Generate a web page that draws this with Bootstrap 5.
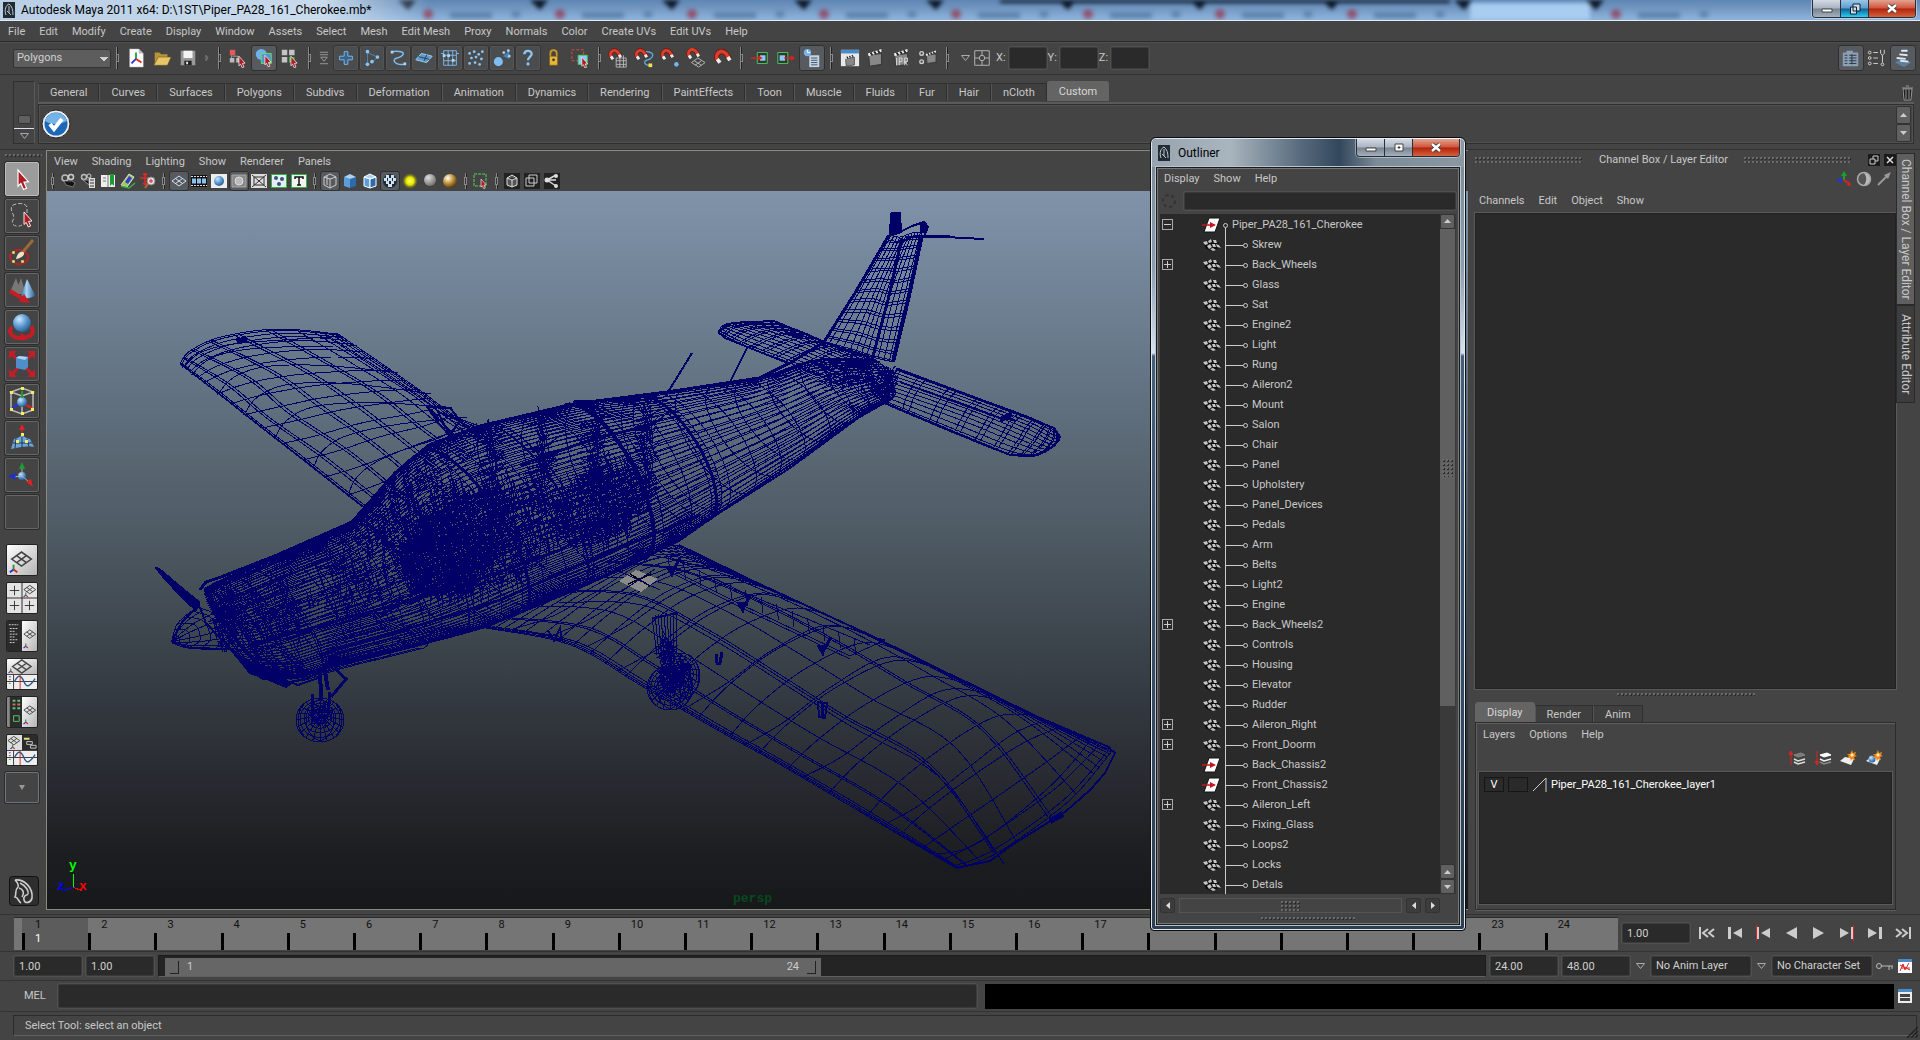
<!DOCTYPE html>
<html lang="en">
<head>
<meta charset="utf-8">
<meta name="viewport" content="width=device-width, initial-scale=1">
<title>Autodesk Maya 2011 x64</title>
<link rel="stylesheet" href="https://cdn.jsdelivr.net/npm/bootstrap@5.3.0/dist/css/bootstrap.min.css">
<style>
:root{--ui:#444;--well:#2a2a2a;--txt:#c8c8c8;--edge:#2b2b2b;--lite:#5c5c5c}
body{background:var(--ui);color:var(--txt);font:11px/14px Roboto,"Liberation Sans",sans-serif;height:100vh;overflow:hidden}
button,input,select{font:inherit;color:inherit}
a{color:inherit;text-decoration:none}
button{background:none;border:0;padding:0}
svg{display:block}
.titlebar{height:21px;border-bottom:1px solid #dfeaf5;color:#000;font:12px/20px Roboto,"Noto Sans",sans-serif;position:relative;overflow:hidden;
 background:linear-gradient(180deg,#40587a00 0,#88aace55 30%,#8fb4dc 100%),#5f86b4}
.tabsblur{position:absolute;inset:0;filter:blur(2px)}
.titleglow{position:relative;background:linear-gradient(90deg,#b9cfe6 0,#cfdfefee 75%,#cfdfef00 100%);padding:0 60px 0 3px;gap:6px}
.winbtns{position:relative;height:18px;border:1px solid #26303c;border-top:0;border-radius:0 0 4px 4px;overflow:hidden;box-shadow:0 0 0 1px #ffffff66}
.winbtns button{width:28px;border-right:1px solid #26303c;background:linear-gradient(#d3dae2 0,#a9b3bf 48%,#77838f 52%,#a4b0bc);display:flex;align-items:center;justify-content:center}
.winbtns .b-hot{background:linear-gradient(#9cc6e8,#5c9dcc 48%,#14608f 52%,#22d0f5)}
.winbtns .b-close{width:46px;border:0;background:linear-gradient(#e3a291 0,#d0543c 48%,#b3230c 52%,#d3623c)}
.menu{display:flex;gap:14px}
.appmenu{height:21px;padding:4px 8px 0;border-bottom:1px solid #292929}
.statusline{height:33px;border-bottom:1px solid #333;border-top:1px solid #4f4f4f;padding-left:13px}
.grip{background:radial-gradient(circle at 1px 1px,#6a6a6a 1px,transparent 1px) 0 0/4px 4px,radial-gradient(circle at 1px 1px,#2c2c2c 1px,transparent 1px) 1px 1px/4px 4px}
.modesel{width:98px;height:19px;background:#5d5d5d;border:1px solid #333;border-radius:2px;padding:0 3px;appearance:none;color:#d0d0d0;background-image:linear-gradient(45deg,transparent 50%,#d0d0d0 50%),linear-gradient(-45deg,transparent 50%,#d0d0d0 50%);background-size:4px 5px;background-position:86px 7px,90px 7px;background-repeat:no-repeat;background-image:linear-gradient(to top right,transparent 50%,#d0d0d0 50%),linear-gradient(to top left,transparent 50%,#d0d0d0 50%)}
.cell{width:26px;height:26px;display:flex;align-items:center;justify-content:center;flex:none}
.cell svg{width:20px;height:20px}
.cell.on{background:#575a5e;box-shadow:inset 0 0 0 1px #303030;border-radius:3px}
.cell.flat{box-shadow:inset 0 0 0 1px #353535,inset 0 0 0 2px #555;border-radius:3px;background:#4b4c4e}
.cell.thin{width:12px}.cell.mid{width:18px}
.vsep{width:11px;height:22px;flex:none;background:linear-gradient(#888,#888) 5px 0/1px 22px no-repeat,linear-gradient(#222,#222) 6px 0/1px 22px no-repeat;display:flex;align-items:center;justify-content:center}
.vsep::after{content:"";width:3px;height:8px;border:1px solid #888;background:#333}
#status .vsep{width:12px}
.field{background:var(--well);border:1px solid #3a3a3a;border-radius:2px;box-shadow:0 0 0 1px #505050;padding:0 4px;min-width:0;color:#d0d0d0}
.xyz{width:38px;height:22px;margin:0 1px 0 3px}
.shelf{padding:6px 6px 5px 13px;height:75px;border-bottom:1px solid #333}
.shelfside{width:22px;border:1px solid #303030;border-right-color:#5a5a5a}
.shelfmain{margin-left:3px}
.stab,.ltab{padding:0 11px;height:18px;line-height:17px;border:1px solid #2f2f2f;border-left-color:#555;border-bottom:0;background:#3f3f3f}
.ltab{height:17px}
.stab.on,.ltab.on{background:#646464;border-radius:3px 3px 0 0;color:#d8d8d8;border-color:#646464;height:20px}
.shelfbody{border:1px solid #2f2f2f;box-shadow:0 -2px 0 #5a5a5a,inset 0 0 0 1px #505050;height:40px;margin-top:3px;padding:1px 2px}
.scrollb{background:#606060;border:1px solid #333;border-radius:2px;display:flex;align-items:center;justify-content:center;color:#ccc}
.toolbox{width:42px;padding:4px 0 0 5px;flex:none}
.tool{width:34px;height:34px;border:1px solid #666;box-shadow:0 0 0 1px #2d2d2d;border-radius:2px;display:flex;align-items:center;justify-content:center;margin-bottom:3px}
.tool svg{width:30px;height:30px}
.tool.on{background:#9c9c9c;border-color:#bbb}
.layouts{padding-top:12px}
.lay{width:32px;height:32px;margin:0 0 6px 1px;display:block}
.lay svg{width:32px;height:32px;border:1px solid #222;border-radius:2px}
.viewport{border:1px solid #8a8a80;border-right:0;min-width:0}
.vmenu{height:20px;padding:4px 0 0 7px}
.pbar{height:20px}
.pbar .cell{width:20px;height:20px}.pbar .cell svg{width:16px;height:16px}
.pbar .vsep{height:16px;background-size:1px 16px}
.stage{background:linear-gradient(#8093a9 0,#68798a 22%,#505c66 46%,#3b434a 64%,#2c2f36 78%,#1b1d20 93%,#17181a);overflow:hidden;position:relative}
.stage svg{overflow:visible}
.wire path{stroke:#000066;fill:none;stroke-width:1;shape-rendering:crispEdges}
.wire .blk{fill:#000066}
.axl{font:bold 13px "Liberation Mono",monospace}
.dock{width:452px;flex:none;padding:3px 0 0 7px;position:relative}
.wellbox{background:var(--well);border:1px solid #222;box-shadow:0 0 0 1px #5a5a5a}
.layerpane{border:1px solid #2c2c2c;box-shadow:inset 1px 1px 0 #606060,0 1px 0 #5c5c5c;height:188px;padding:5px 3px}
.laybtn{width:20px;height:15px;line-height:13px;border:1px solid #161616}
.vtab{writing-mode:vertical-rl;white-space:nowrap;width:19px;border:1px solid #2a2a2a;font-size:12px;line-height:17px;background:#3d3d3d}
.vtab.on{background:#5f5f5f}
.tbar{border-top:1px solid #333;position:relative}
.ruler{background:#757575;border-top:1px solid #2b2b2b;height:33px;padding:0 7px 0 8px;color:#111}
.frame{flex:1 1 0;border-left:3px solid transparent;border-image:linear-gradient(#0000 15px,#000 15px) 1;padding-left:10px;line-height:14px;min-width:0}
.frame.now{background:#5c5c5c}
.range{background:#242424;height:22px;border:1px solid #1c1c1c;border-bottom-color:#606060;padding:2px 0 0 6px}
.rbar{width:656px;height:18px;background:#666;color:#ccc;padding:0 5px}
.rend{width:9px;height:13px;border:solid #222;border-width:0 1px 1px 0}
.numf{width:68px;height:20px}
.namef{width:100px;height:20px}
.tri{width:9px;height:6px;margin:0 2px}
.trans svg{width:26px;height:16px}
.outliner{position:absolute;z-index:5;top:137px;right:454px;bottom:109px;width:316px;border-radius:6px 6px 4px 4px;border:1px solid #0c0c0c;padding:0 5px 5px;display:flex;flex-direction:column;
 background:linear-gradient(#8a97a3 0,#7f8d99 30px,#8c9db0 130px,#d6e2ee 215px,#46607c 218px,#3c5370 50%,#2c3e50);box-shadow:inset 0 0 0 1px #dfe8f0}
.ohead{height:28px;color:#000;font:12px/28px Roboto,sans-serif;margin:1px -4px 0;padding-left:6px;border-radius:5px 5px 0 0;background:linear-gradient(90deg,#97a4af 0,#a9b5be 25%,#56697c 48%,#33475c 60%,#7d8b98 72%,#8b98a2)}
.oclient{border:1px solid #1c1c1c;box-shadow:0 0 0 1px #b8c4cf,inset 0 0 0 1px #777;background:var(--ui);min-height:0;padding:4px 3px 3px}
.tree{background:var(--well);overflow:hidden;position:relative;padding-top:1px}
.trow{height:20px;display:flex;align-items:center}
.exp{width:11px;height:11px;border:1px solid #aaa;margin:0 29px 0 2px;position:relative;flex:none}
.exp.none{visibility:hidden}
.exp::before,.exp.plus::after{content:"";position:absolute;background:#ccc;left:1px;top:4px;width:7px;height:1px}
.exp.plus::after{transform:rotate(90deg)}
.conn{width:26px;height:20px;flex:none;margin:0 3px 0 2px}
.conn.root{width:6px}
.tree svg.ti{width:19px;height:16px;flex:none}
.mini{width:15px;height:15px}
.dim{background:#3c3c3c}
.sizer{position:absolute;right:2px;bottom:2px}
</style>
<script src="https://cdn.jsdelivr.net/npm/bootstrap@5.3.0/dist/js/bootstrap.bundle.min.js"></script>
</head>
<body class="d-flex flex-column position-relative m-0">
<svg width="0" height="0" class="position-absolute" aria-hidden="true">
<defs>
<radialGradient id="gBlue" cx=".35" cy=".3" r=".8"><stop offset="0" stop-color="#cfe9ff"/><stop offset=".5" stop-color="#5a9ad2"/><stop offset="1" stop-color="#1f4f82"/></radialGradient>
<radialGradient id="gGold" cx=".35" cy=".3" r=".8"><stop offset="0" stop-color="#fff"/><stop offset=".45" stop-color="#c59a3e"/><stop offset="1" stop-color="#3c2505"/></radialGradient>
<radialGradient id="gGrey" cx=".35" cy=".3" r=".8"><stop offset="0" stop-color="#ddd"/><stop offset="1" stop-color="#666"/></radialGradient>
<radialGradient id="gYel"><stop offset="0" stop-color="#ffff60"/><stop offset=".5" stop-color="#e6e600"/><stop offset="1" stop-color="#77770000"/></radialGradient>
<linearGradient id="gWhite" x2="1" y2="1"><stop stop-color="#fff"/><stop offset="1" stop-color="#b5b5b5"/></linearGradient>
<linearGradient id="gCone"><stop stop-color="#2f6ca4"/><stop offset=".4" stop-color="#a9d4f5"/><stop offset="1" stop-color="#2a6296"/></linearGradient>
<path id="arw" d="M0 0l8 9-3.400 .4 2 4.600-2.400 1-2-4.600L0 12.500z" fill="#b01c26" stroke="#fff" stroke-width=".9"/>
<g id="persp"><path d="M0 0L7-5 14 0 7 5zM3.500-2.500L10.500 2.500M3.500 2.500L10.500-2.500" fill="none" stroke="#444" stroke-width="1.100"/></g>
<g id="axs"><path d="M0 0v-5" stroke="#1a9c2e" stroke-width="2"/><path d="M0 0l-4 3" stroke="#2233dd" stroke-width="2"/><path d="M0 0l4 3" stroke="#dd2222" stroke-width="2"/></g>
<g id="mag"><path d="M3 9C-1 4 6-3 11 3l3 5" fill="none" stroke="#7c120c" stroke-width="5"/><path d="M3 9C-1 4 6-3 11 3l3 5" fill="none" stroke="#d8402e" stroke-width="3.500"/><path d="M2.500 8l2.500 3.500M12.500 6l2 3.200" stroke="#eee" stroke-width="3.500"/></g>
<g id="clap"><path d="M3 8l14-2v12l-13 2z" fill="#888" stroke="#333"/><path d="M2 6L17 1v3L3 9z" fill="#eee"/><path d="M5 5l2 3M9 4l2 2.500M13 2.500l2 3" stroke="#222" stroke-width="2"/></g>
</defs>
<symbol id="app" viewBox="0 0 12 16"><path d="M0 0h12v16H0z" fill="#222b33"/><path d="M3 13C1 8 3 3 6 2c3 2 4 6 4 11M6 4v7M4 9l4 4" stroke="#bcc8d0" fill="none"/></symbol>
<symbol id="new" viewBox="0 0 22 22"><path d="M4 1h10l5 5v15H4z" fill="#fff" stroke="#aaa" stroke-width=".5"/><path d="M14 1l5 5h-5z" fill="#bbb"/><path d="M11 12V5" stroke="#17a32b" stroke-width="2"/><path d="M11 12l-5 5" stroke="#2435e0" stroke-width="2"/><path d="M11 12l6 4" stroke="#d22" stroke-width="2"/></symbol>
<symbol id="open" viewBox="0 0 22 22"><path d="M3 19V5h5l2 2h7v4" fill="#b99338"/><path d="M2 19L7 10h14l-4 9z" fill="#e6c568" stroke="#69501a" stroke-width=".6"/></symbol>
<symbol id="save" viewBox="0 0 22 22"><path d="M3 3h16v16H3z" fill="#999"/><path d="M6 3h10v8H6z" fill="#f4f4f4"/><path d="M7 14h8v5H7z" fill="#222"/><path d="M9 15h2v3H9z" fill="#eee"/></symbol>
<symbol id="more" viewBox="0 0 22 22"><path d="M9 6l4 5-4 5z" fill="none" stroke="#aaa"/></symbol>
<symbol id="hier" viewBox="0 0 22 22"><path d="M2 2h6v6H2z" fill="#e45a5a"/><path d="M2 11h5v5H2zM9 11h5v5H9z" fill="#bbb"/><path d="M4 8v3M5 9h6v2" stroke="#aaa" fill="none"/><use href="#arw" transform="translate(12 9) scale(.85)"/></symbol>
<symbol id="objm" viewBox="0 0 22 22"><circle cx="8" cy="7" r="6" fill="#6fb2ea"/><path d="M8 6h11v11H8z" fill="#5497cf" stroke="#65e065"/><use href="#arw" transform="translate(12 8) scale(.85)"/></symbol>
<symbol id="comp" viewBox="0 0 22 22"><path d="M2 2h6v6H2zM10 2h6v6h-6zM2 10h6v6H2z" fill="#c4c4c4"/><path d="M10 10h6v6h-6z" fill="#3bc24a"/><use href="#arw" transform="translate(12 9) scale(.85)"/></symbol>
<symbol id="mask" viewBox="0 0 22 22"><path d="M6 4h10M6 7h10M6 18h10M7 10h8l-4 5z" fill="none" stroke="#aaa"/></symbol>
<symbol id="plus" viewBox="0 0 22 22"><path d="M9 4h4v5h5v4h-5v5H9v-5H4V9h5z" fill="#39618a" stroke="#7fbdf0"/></symbol>
<symbol id="joint" viewBox="0 0 22 22"><path d="M6 18V5l11 5-5 5" fill="none" stroke="#4f86b8"/><g fill="#8cc6f5"><circle cx="6" cy="4" r="2"/><circle cx="6" cy="18" r="2"/><circle cx="17" cy="10" r="2"/><circle cx="11" cy="15" r="2"/></g></symbol>
<symbol id="curve" viewBox="0 0 22 22"><path d="M4 4c20-2 12 6 6 7s-4 8 8 7" fill="none" stroke="#7fbdf0" stroke-width="1.600"/><path d="M3 3h3v3H3zM17 16h3v3h-3z" fill="#a8d6fa"/></symbol>
<symbol id="surf" viewBox="0 0 22 22"><path d="M2 13l6-7 12 3-6 7z" fill="#5b9bd5" stroke="#a6d3f7"/><path d="M5 9.500l12 3M11 14.500l3-7" stroke="#333"/></symbol>
<symbol id="latt" viewBox="0 0 22 22"><path d="M4 3h14v16H4zM4 8h14M4 14h14M9 3v16M14 3v16M1 6h3M18 6h3" fill="none" stroke="#7fbdf0"/><path d="M3 7h3v3H3zM8 7h3v3H8zM13 12h3v3h-3z" fill="#a8d6fa"/></symbol>
<symbol id="dots" viewBox="0 0 22 22"><g fill="#8cc6f5"><circle cx="4" cy="6" r="1.500"/><circle cx="9" cy="4" r="1.500"/><circle cx="14" cy="7" r="1.500"/><circle cx="18" cy="4" r="1.500"/><circle cx="6" cy="11" r="1.500"/><circle cx="11" cy="10" r="1.500"/><circle cx="17" cy="12" r="1.500"/><circle cx="4" cy="17" r="1.500"/><circle cx="10" cy="16" r="1.500"/><circle cx="15" cy="18" r="1.500"/></g></symbol>
<symbol id="dyn" viewBox="0 0 22 22"><circle cx="7" cy="15" r="5" fill="#7fbdf0"/><path d="M12 9l7-6v9z" fill="#4c83b7"/><g fill="#a8d6fa"><circle cx="13" cy="5" r="1.500"/><circle cx="18" cy="3" r="1.500"/><circle cx="19" cy="9" r="1.500"/></g></symbol>
<symbol id="quest" viewBox="0 0 22 22"><path d="M7 7c0-5 8-5 8-.5 0 3-4 3.500-4 7" fill="none" stroke="#8cc6f5" stroke-width="2.600"/><circle cx="11" cy="17.500" r="1.700" fill="#8cc6f5"/></symbol>
<symbol id="lock" viewBox="0 0 22 22"><path d="M7 10V6c0-5 7-5 7 0v4" fill="none" stroke="#c79a24" stroke-width="2"/><path d="M6 9h9v10H6z" fill="#e3b53a" stroke="#6d4e0a" stroke-width=".6"/><circle cx="10.500" cy="13" r="1.500" fill="#432"/></symbol>
<symbol id="hilite" viewBox="0 0 22 22"><path d="M2 2h13v12H2z" fill="none" stroke="#f04848" stroke-dasharray="3 2"/><path d="M9 8h10v10H9z" fill="#8cc9f3" stroke="#45d25a"/><use href="#arw" transform="translate(13 10) scale(.8)"/></symbol>
<symbol id="mgrid" viewBox="0 0 22 22"><path d="M9 11h11v10H9zM13 8v13M17 8v13M9 14h11M9 18h11" fill="none" stroke="#bbb"/><use href="#mag" transform="translate(1 2) scale(.9)"/></symbol>
<symbol id="mcurve" viewBox="0 0 22 22"><path d="M12 4c14 0 8 8 3 9s-4 6 2 6" fill="none" stroke="#65a9e8" stroke-width="1.500"/><path d="M16 17h4v4h-4z" fill="#f4e840"/><use href="#mag" transform="translate(1 2) scale(.9)"/></symbol>
<symbol id="mpt" viewBox="0 0 22 22"><circle cx="18" cy="18" r="2.500" fill="#73b5ef"/><use href="#mag" transform="translate(1 2) scale(.9)"/></symbol>
<symbol id="mpl" viewBox="0 0 22 22"><path d="M6 16l7-5 8 5-7 5zM9 14l8 5M10 19l7-5" fill="none" stroke="#bbb"/><use href="#mag" transform="translate(1 1) scale(.9)"/></symbol>
<symbol id="mag1" viewBox="0 0 22 22"><use href="#mag" transform="translate(3 3) scale(1.150)"/></symbol>
<symbol id="inp" viewBox="0 0 22 22"><path d="M8 5h11v12H8z" fill="#333" stroke="#48d25a"/><path d="M11 8h6v6h-6z" fill="#8cc9f3"/><path d="M1 11h8" stroke="#e02020" stroke-width="1.500"/><path d="M9 8l5 3-5 3z" fill="#e02020"/></symbol>
<symbol id="outp" viewBox="0 0 22 22"><path d="M2 5h11v12H2z" fill="#333" stroke="#48d25a"/><path d="M4 8h6v6H4z" fill="#8cc9f3"/><path d="M9 11h9" stroke="#e02020" stroke-width="1.500"/><path d="M16 8l5 3-5 3z" fill="#e02020"/></symbol>
<symbol id="hist" viewBox="0 0 22 22"><path d="M8 8h11v13H8z" fill="#c4d5e4"/><path d="M10 11h7M10 13.500h7M10 16h7M10 18.500h7" stroke="#3a4d60"/><circle cx="6" cy="5" r="4" fill="#79b4e8"/><path d="M6 2v3h3" stroke="#fff" fill="none"/></symbol>
<symbol id="rwin" viewBox="0 0 22 22"><path d="M1 2h20v18H1z" fill="#e8e8e8"/><path d="M1 2h20v4H1z" fill="#4a8ac6"/><use href="#clap" transform="translate(4 6) scale(.7)"/></symbol>
<symbol id="rend" viewBox="0 0 22 22"><use href="#clap"/></symbol>
<symbol id="ipr" viewBox="0 0 22 22"><use href="#clap"/><path d="M5 11v8M8 19v-8h3v4H8M14 19v-8h3v4h-3l3 4" stroke="#ddd" fill="none"/></symbol>
<symbol id="rset" viewBox="0 0 22 22"><use href="#clap" transform="translate(7 2) scale(.75)"/><circle cx="4" cy="6" r="2" fill="none" stroke="#ccc" stroke-width="1.500"/><circle cx="4" cy="15" r="2" fill="none" stroke="#ccc" stroke-width="1.500"/></symbol>
<symbol id="frm" viewBox="0 0 22 22"><path d="M3 3h16v16H3zM3 11h16M11 3v16" fill="none" stroke="#bbb"/><circle cx="11" cy="11" r="3" fill="#444" stroke="#bbb"/></symbol>
<symbol id="tri" viewBox="0 0 9 6"><path d="M.5.5h8l-4 5z" fill="#444" stroke="#aaa"/></symbol>
<symbol id="cbox" viewBox="0 0 22 22"><path d="M2 5h4V3h7v2h6v15H2z" fill="#8ba0b5"/><path d="M4 8h3M4 11h3M4 14h3M4 17h3M9 8h8M9 11h8M9 14h8M9 17h8M12 7v11" stroke="#26333f"/></symbol>
<symbol id="toolset" viewBox="0 0 22 22"><g fill="none" stroke="#ddd"><circle cx="3" cy="5" r="1.500"/><circle cx="3" cy="11" r="1.500"/><circle cx="3" cy="17" r="1.500"/><path d="M7 5h5M7 11h5M7 17h5M17 8v8M15 2v4l2 2 2-2V2"/><circle cx="17" cy="18" r="1.500"/></g></symbol>
<symbol id="attr" viewBox="0 0 22 22"><path d="M2 16l7-4 11 4-8 5z" fill="#5d7f9f"/><path d="M4 11l10 1M7 7l9 1M9 3h7M8 14l9 1" stroke="#dfe9f2" stroke-width="2"/></symbol>
<symbol id="check" viewBox="0 0 30 30"><circle cx="15" cy="15" r="14" fill="#eee" stroke="#222"/><circle cx="15" cy="15" r="11.500" fill="#1c67b8"/><path d="M4 12a11.500 11.500 0 0 1 22 0c-8 4-16 4-22 0z" fill="#75b3e6"/><path d="M9 15l4 5 8-10" fill="none" stroke="#fff" stroke-width="4"/></symbol>
<symbol id="trash" viewBox="0 0 14 16"><path d="M2 4h10v11H3z" fill="#1e1e1e"/><path d="M3 4h9l-1 11H4zM2 3h11M6 1h3" fill="none" stroke="#999"/><path d="M6 5v9M9 5v9" stroke="#999"/></symbol>
<symbol id="sel" viewBox="0 0 30 30"><use href="#arw" transform="translate(11 6) scale(1.300)"/></symbol>
<symbol id="lasso" viewBox="0 0 30 30"><path d="M20 12V6C18 1 8 2 5 5c-3 5 4 9 1 14s4 8 9 5" fill="none" stroke="#bbb" stroke-dasharray="4 2"/><use href="#arw" transform="translate(17 11)"/></symbol>
<symbol id="paint" viewBox="0 0 30 30"><ellipse cx="12" cy="19" rx="9" ry="7" fill="none" stroke="#c11f1f" stroke-width="2"/><path d="M15 15L26 2" stroke="#9a6a35" stroke-width="3"/><path d="M9 21c1-5 4-8 7-7s0 6-7 7z" fill="#eee3c8"/><path d="M5 13h3v3H5zM5 22h3v3H5zM14 22h3v3h-3z" fill="#f4ee60" stroke="#444" stroke-width=".5"/></symbol>
<symbol id="move" viewBox="0 0 30 30"><path d="M3 17L9 3l5 14zM8 19L14 3l5 16z" fill="#777"/><path d="M14 21L20 4l8 16c-4 4-10 4-14 1z" fill="url(#gCone)"/><path d="M3 16l13 8" stroke="#c61c26" stroke-width="4"/><path d="M12 27l11 1-6-9z" fill="#c61c26"/></symbol>
<symbol id="rot" viewBox="0 0 30 30"><path d="M5 15c-5 6 1 12 11 11 9-1 12-6 8-12" fill="none" stroke="#c61c26" stroke-width="4"/><circle cx="15" cy="11" r="9" fill="url(#gBlue)"/><path d="M13 21l2 8 7-4z" fill="#c61c26"/></symbol>
<symbol id="scale" viewBox="0 0 30 30"><path d="M4 4l22 22M26 4L4 26" stroke="#c61c26" stroke-width="3"/><path d="M2 2h8l-8 8zM28 2h-8l8 8zM2 28h8l-8-8zM28 28h-8l8-8z" fill="#c61c26"/><path d="M9 9l3-2 9 1v10l-3 3-9-2z" fill="#4e8fca"/><path d="M9 9l3-2 9 1-3 3z" fill="#a8d4f5"/></symbol>
<symbol id="manip" viewBox="0 0 30 30"><path d="M4 6l11-4 11 4-11 4zM4 6v18l11 4 11-4V6M15 10v18" fill="none" stroke="#bbb" stroke-width="1.500"/><circle cx="15" cy="16" r="5" fill="url(#gBlue)"/><path d="M15 12V5" stroke="#1aa02c" stroke-width="2"/><path d="M11 19l-6 3" stroke="#23d" stroke-width="2"/><path d="M19 19l6 3" stroke="#d22" stroke-width="2"/><path d="M3 5h3v3H3zM24 5h3v3h-3zM3 22h3v3H3zM24 22h3v3h-3zM14 1h3v3h-3zM14 26h3v3h-3z" fill="#f4ee60"/></symbol>
<symbol id="soft" viewBox="0 0 30 30"><path d="M4 26l3-10c4 0 5-3 8-3s4 3 8 3l4 8c-8-1-14 0-23 2z" fill="#69a5d9"/><path d="M9 16l-1 9M15 14v11M20 16l2 8M6 20h19" stroke="#235"/><path d="M15 13V3" stroke="#c22" stroke-width="1.500"/><path d="M12 7l3-6 3 6z" fill="#d22"/><path d="M14 10h3v3h-3zM9 17h3v3H9zM18 17h3v3h-3z" fill="#f4ee60"/></symbol>
<symbol id="univ" viewBox="0 0 30 30"><circle cx="15" cy="16" r="4" fill="url(#gBlue)"/><path d="M15 16V6M15 16l-9 1M15 16l7 6" stroke="#aac" stroke-width="1"/><path d="M12 9l3-7 3 7z" fill="#1aa02c"/><path d="M9 13l-8 3 7 4z" fill="#2030c8"/><path d="M19 22l5-3 2 8z" fill="#d22"/></symbol>
<symbol id="none" viewBox="0 0 30 30"></symbol>
<symbol id="l1" viewBox="0 0 32 32"><path d="M0 0h32v32H0z" fill="url(#gWhite)"/><use href="#persp" transform="translate(5 15) scale(1.500)"/><use href="#axs" x="7" y="26"/></symbol>
<symbol id="l2" viewBox="0 0 32 32"><path d="M0 0h32v32H0z" fill="#e4e4e4"/><path d="M16 0v32M0 16h32" stroke="#222"/><path d="M8 3v10M3 8h10M8 19v10M3 24h10M24 19v10M19 24h10" stroke="#333"/><use href="#persp" transform="translate(18 7) scale(.9)"/><use href="#axs" transform="translate(20 13) scale(.6)"/></symbol>
<symbol id="l3" viewBox="0 0 32 32"><path d="M0 0h32v32H0z" fill="#2b2b2b"/><path d="M16 0h16v32H16z" fill="url(#gWhite)"/><path d="M2 4h10M3 8h8M3 11h6M3 14h8M3 17h6M3 20h9M3 23h6" stroke="#ddd" stroke-dasharray="2 1"/><use href="#persp" transform="translate(18 14) scale(.9)"/><use href="#axs" transform="translate(20 27) scale(.6)"/></symbol>
<g id="graph"><path d="M0 17h32v15H0z" fill="#eee"/><path d="M0 24h32M7 17v15" stroke="#333"/><path d="M8 24c4-8 7-7 10 0s6 6 12-3" stroke="#2c5b8c" fill="none" stroke-width="1.500"/><path d="M14 17v15" stroke="#d22"/><path d="M2 19h2" stroke="#24d"/><path d="M2 22h2" stroke="#d22"/><path d="M2 26h2" stroke="#1a3"/></g>
<symbol id="l4" viewBox="0 0 32 32"><path d="M0 0h32v16H0z" fill="url(#gWhite)"/><use href="#persp" transform="translate(6 8) scale(1.400)"/><use href="#axs" transform="translate(4 13) scale(.6)"/><use href="#graph"/></symbol>
<symbol id="l5" viewBox="0 0 32 32"><path d="M0 0h32v32H0z" fill="#2b2b2b"/><path d="M0 0h3v32H0z" fill="#888"/><path d="M16 0h16v32H16z" fill="url(#gWhite)"/><path d="M6 3h3v2H6zM11 3h3v2h-3zM6 11h3v2H6zM11 11h3v2h-3z" fill="#5c6"/><path d="M6 7h3v2H6zM11 7h3v2h-3z" fill="#d66"/><path d="M7 20h6v6H7z" fill="none" stroke="#5c6"/><use href="#persp" transform="translate(18 14) scale(.9)"/><use href="#axs" transform="translate(20 27) scale(.6)"/></symbol>
<symbol id="l6" viewBox="0 0 32 32"><path d="M0 0h16v16H0z" fill="#ddd"/><path d="M16 0h16v16H16z" fill="#2b2b2b"/><use href="#persp" transform="translate(1 6) scale(.9)"/><use href="#axs" transform="translate(6 13) scale(.6)"/><path d="M18 3h6v2h-6z" fill="#e8e070"/><path d="M21 7h6v3h-6zM25 11h6v3h-6z" fill="none" stroke="#ccc"/><use href="#graph"/></symbol>
<symbol id="maya" viewBox="0 0 30 30"><rect x=".5" y=".5" width="29" height="29" rx="3" fill="#2e2e2e" stroke="#111"/><path d="M6 4c10-1 18 8 17 18-1 5-7 6-8 2-1-3 2-6 4-5M6 4c2 2 4 4 3 7-4 4-1 6-3 10 3 0 3 4 6 6M11 7c6 3 9 8 8 11M10 12c4 1 6 5 3 9" fill="none" stroke="#ccc" stroke-width="1.600"/></symbol>
<symbol id="cam" viewBox="0 0 16 16"><circle cx="5" cy="5" r="3" fill="none" stroke="#bbb" stroke-width="1.500"/><circle cx="11" cy="4" r="2.500" fill="none" stroke="#ccc" stroke-width="1.500"/><path d="M4 8h8l3 2-2 4-7-2z" fill="#111" stroke="#999" stroke-width=".7"/></symbol>
<symbol id="camat" viewBox="0 0 16 16"><circle cx="4" cy="4" r="2.500" fill="none" stroke="#bbb" stroke-width="1.500"/><circle cx="9" cy="3" r="2" fill="none" stroke="#ccc"/><path d="M3 7h6v5z" fill="#111" stroke="#999"/><path d="M9 5h6v10H9z" fill="#ddd"/><path d="M10 7h4M10 10h4M10 13h4" stroke="#333"/></symbol>
<symbol id="book" viewBox="0 0 16 16"><path d="M1 2h14v12H1z" fill="#eee"/><path d="M8 2v12M3 5h3M3 8h3" stroke="#777"/><path d="M10 1h4v12l-2-2-2 2z" fill="#1c9a34"/></symbol>
<symbol id="imgp" viewBox="0 0 16 16"><path d="M1 12L9 1l5 3-7 10z" fill="#9ad04e" stroke="#ddd"/><path d="M5 9l4-6 3 2-4 6z" fill="#3b3bd0"/><path d="M1 13l8 2 6-5" stroke="#3bb04a" fill="none" stroke-width="1.500"/></symbol>
<symbol id="pan" viewBox="0 0 16 16"><path d="M5 0v12M0 5h11M3 2l2-2 2 2M3 10l2 2 2-2" stroke="#e02828" fill="none" stroke-width="1.500"/><circle cx="11" cy="8" r="4" fill="#ddd" stroke="#888"/><path d="M9 8h4M11 6v4" stroke="#d22"/><path d="M8 11l-3 4" stroke="#a76a3a" stroke-width="2"/></symbol>
<symbol id="grid" viewBox="0 0 16 16"><path d="M1 8l7-5 7 5-7 5zM4.500 5.500l7 5M4.500 10.500l7-5" fill="none" stroke="#cfe0f0"/></symbol>
<symbol id="film" viewBox="0 0 16 16"><path d="M0 2h16v12H0z" fill="#111"/><path d="M1 5.500h4v5H1zM6 5.500h4v5H6zM11 5.500h4v5h-4z" fill="#8cc0ee"/><path d="M0 3.500h16M0 12.500h16" stroke="#ddd" stroke-dasharray="2 1"/></symbol>
<symbol id="resg" viewBox="0 0 16 16"><path d="M0 1h16v14H0z" fill="#eee"/><circle cx="8" cy="8" r="5" fill="url(#gBlue)"/></symbol>
<symbol id="gate" viewBox="0 0 16 16"><path d="M1 2h14v12H1z" fill="#888" stroke="#aaa"/><circle cx="8" cy="8" r="4" fill="#bbb" stroke="#ddd"/></symbol>
<symbol id="fchart" viewBox="0 0 16 16"><path d="M0 1h16v14H0z" fill="#ddd"/><path d="M1 2l14 12M15 2L1 14M3 4h10v8H3z" stroke="#333" fill="none"/></symbol>
<symbol id="safe" viewBox="0 0 16 16"><path d="M.5 1.500h15v13H.5z" fill="#e8eef4" stroke="#2fb540"/><circle cx="5" cy="5" r="2" fill="#357"/><circle cx="11" cy="6" r="2" fill="#357"/><circle cx="8" cy="11" r="2" fill="#357"/></symbol>
<symbol id="safet" viewBox="0 0 16 16"><path d="M.5 1.500h15v13H.5z" fill="#f4f4f4" stroke="#2fb540"/><path d="M4 6V4h8v2M8 4v8M6 12h4" stroke="#111" fill="none" stroke-width="1.500"/></symbol>
<symbol id="cubew" viewBox="0 0 16 16"><path d="M2 4l6-3 6 3v8l-6 3-6-3zM2 4l6 2 6-2M8 6v9M5 3v9" fill="none" stroke="#ccc"/></symbol>
<symbol id="cubes" viewBox="0 0 16 16"><path d="M2 4l6 2v9l-6-2z" fill="#5d9cda"/><path d="M8 6l6-2v9l-6 2z" fill="#2f6bab"/><path d="M2 4l6-3 6 3-6 2z" fill="#a8d2f6"/></symbol>
<symbol id="cubesw" viewBox="0 0 16 16"><g stroke="#fff"><path d="M2 4l6 2v9l-6-2z" fill="#5d9cda"/><path d="M8 6l6-2v9l-6 2z" fill="#2f6bab"/><path d="M2 4l6-3 6 3-6 2z" fill="#a8d2f6"/></g></symbol>
<symbol id="chk" viewBox="0 0 16 16"><circle cx="8" cy="8" r="7" fill="#1d2b3b"/><path d="M4 2h3v3H4zM9 2h3v3H9zM6 5h4v3H6zM2 5h3v3H2zM11 5h3v3h-3zM4 8h3v3H4zM9 8h3v3H9zM6 11h4v3H6z" fill="#cfe0ee"/></symbol>
<symbol id="yel" viewBox="0 0 16 16"><circle cx="8" cy="8" r="8" fill="url(#gYel)"/></symbol>
<symbol id="gry" viewBox="0 0 16 16"><circle cx="8" cy="7" r="6" fill="url(#gGrey)"/></symbol>
<symbol id="gld" viewBox="0 0 16 16"><circle cx="8" cy="8" r="7" fill="url(#gGold)"/></symbol>
<symbol id="iso" viewBox="0 0 16 16"><path d="M1 1h12v12H1z" fill="none" stroke="#4ed25c" stroke-dasharray="3 1"/><use href="#arw" transform="translate(8 6) scale(.65)"/></symbol>
<symbol id="xray" viewBox="0 0 16 16"><path d="M0 0h16v16H0z" fill="#222"/><path d="M3 5l5-3 5 3v7l-5 2-5-2zM3 5l5 2 5-2M8 7v7" fill="#555" stroke="#ddd"/></symbol>
<symbol id="xj" viewBox="0 0 16 16"><path d="M0 0h16v16H0z" fill="#222"/><path d="M2 5h8v8H2zM5 2h8v8H5z" fill="none" stroke="#ccc"/></symbol>
<symbol id="xs" viewBox="0 0 16 16"><path d="M0 0h16v16H0z" fill="#222"/><path d="M3 7l9-5M3 7l9 6M3 7h9" stroke="#ddd" stroke-width="1.500"/><circle cx="3" cy="7" r="2.500" fill="#ddd"/><circle cx="12" cy="3" r="2" fill="#ddd"/><circle cx="12" cy="13" r="2" fill="#ddd"/></symbol>
<symbol id="mesh" viewBox="0 0 19 16"><path d="M1 5l8-3 2 2 5 1 3 5-8 4-7-2z" fill="#111"/><path d="M1 5l4-1 1 3-3 1zM6 4l3-2 1 3-3 1zM11 3h3l1 3-3 0zM5 9l3-2 2 3-3 2zM10 7l3 0 1 3-3 0zM14 7l3 1 2 3-4-1zM8 12l3-1 3 2-3 1z" fill="#c4c4c4"/></symbol>
<symbol id="xform" viewBox="0 0 19 16"><path d="M7 1h11l-5 14H2z" fill="#fff" stroke="#111"/><path d="M0 8h9" stroke="#c4161c" stroke-width="1.500"/><path d="M8 5l6 3-6 3z" fill="#c4161c"/></symbol>
<symbol id="key" viewBox="0 0 18 10"><circle cx="3" cy="5" r="2.500" fill="none" stroke="#bbb"/><path d="M5 5h12M13 5v4M16 5v3" stroke="#bbb" fill="none"/></symbol>
<symbol id="autok" viewBox="0 0 14 14"><path d="M0 0h14v14H0z" fill="#fff"/><path d="M0 0h14v3H0z" fill="#4a8ac6"/><path d="M2 12l3-7 2 6 4-7M2 6l10 5M3 9h9" stroke="#d22" fill="none"/></symbol>
<symbol id="scr" viewBox="0 0 14 14"><path d="M0 0h14v14H0z" fill="#eee"/><path d="M0 0h14v3H0z" fill="#4a8ac6"/><path d="M2 5h10v3H2zM2 9h10v3H2z" fill="#444"/></symbol>
<symbol id="lup" viewBox="0 0 18 16"><path d="M3 15V3M1 5l2-4 2 4" stroke="#d22" fill="#d22"/><path d="M6 5l4 2 7-2-4-2z" fill="#777" stroke="#888"/><path d="M6 9l4 2 7-2M6 12l4 2 7-2" fill="none" stroke="#ddd" stroke-width="1.500"/></symbol>
<symbol id="ldn" viewBox="0 0 18 16"><path d="M3 1v12M1 11l2 4 2-4" stroke="#d22" fill="#d22"/><path d="M6 5l4 2 7-2-4-2z" fill="#fff" stroke="#fff"/><path d="M6 9l4 2 7-2" fill="none" stroke="#eee" stroke-width="1.500"/><path d="M6 12l4 2 7-2" fill="none" stroke="#888" stroke-width="1.500"/></symbol>
<g id="star"><path d="M12 0l1 3 3-1-1 3 2 1-3 1 1 3-3-1-1 2-1-3-3 0 2-2-2-2 3 0z" fill="#f08a1c"/><circle cx="12" cy="5" r="1.500" fill="#fff6c0"/></g>
<symbol id="lnew" viewBox="0 0 18 16"><path d="M0 11l5-4 9 2-3 6z" fill="#eee"/><use href="#star"/></symbol>
<symbol id="lnew2" viewBox="0 0 18 16"><path d="M0 11l5-4 9 2-3 6z" fill="#eee"/><circle cx="6" cy="9" r="3.500" fill="url(#gBlue)"/><use href="#star"/></symbol>
<symbol id="tiny3" viewBox="0 0 16 16"><path d="M8 9V3" stroke="#1aa02c" stroke-width="2"/><path d="M5 5l3-5 3 5z" fill="#1aa02c"/><path d="M8 9l4 3" stroke="#d22" stroke-width="2"/><path d="M11 14l4 1-2-5z" fill="#d22"/><path d="M6 7l-6 2 6 3z" fill="#23d"/></symbol>
<symbol id="half" viewBox="0 0 16 16"><circle cx="8" cy="8" r="6.500" fill="#555" stroke="#aaa" stroke-width="1.500"/><path d="M8 2a6 6 0 0 1 0 12c3-4 3-8 0-12z" fill="#bbb"/></symbol>
<symbol id="diag" viewBox="0 0 16 16"><path d="M2 14L11 5" stroke="#999" stroke-width="2"/><path d="M8 4l7-3-3 7z" fill="#999"/></symbol>
<symbol id="t1" viewBox="0 0 26 16"><path d="M5 2h2v12H5z" fill="#ccc"/><path d="M14 4L9 8l5 4M20 4l-5 4 5 4" fill="none" stroke="#ccc" stroke-width="2"/></symbol>
<symbol id="t2" viewBox="0 0 26 16"><path d="M6 2h3v12H6zM20 3v10L11 8z" fill="#ccc"/></symbol>
<symbol id="t3" viewBox="0 0 26 16"><path d="M6 2h3v12H6zM20 3v10L11 8z" fill="#ccc"/><path d="M6.500 0v16" stroke="#e02020"/></symbol>
<symbol id="t4" viewBox="0 0 26 16"><path d="M19 2v12L8 8z" fill="#ccc"/></symbol>
</svg>

<header class="titlebar d-flex justify-content-between">
  <div class="tabsblur"><svg width="100%" height="20" id="blurtabs"></svg></div>
  <div class="titleglow d-flex align-items-center"><svg width="12" height="16"><use href="#app"/></svg><span>Autodesk Maya 2011 x64: D:\1ST\Piper_PA28_161_Cherokee.mb*</span></div>
  <div class="winbtns d-flex me-1"><button aria-label="Minimize"><svg width="12" height="10"><path d="M1 5h10v3H1z" fill="#fff" stroke="#444"/></svg></button><button class="b-hot" aria-label="Restore"><svg width="12" height="12"><path d="M4 1h7v7H4zM1.500 4h6v7h-6z" fill="#cde" stroke="#123"/></svg></button><button class="b-close" aria-label="Close"><svg width="12" height="11"><path d="M2 2l8 7M10 2L2 9" stroke="#333" stroke-width="4"/><path d="M2 2l8 7M10 2L2 9" stroke="#fff" stroke-width="2.500"/></svg></button></div>
</header>
<nav class="menu appmenu" data-menu="File,Edit,Modify,Create,Display,Window,Assets,Select,Mesh,Edit Mesh,Proxy,Normals,Color,Create UVs,Edit UVs,Help"></nav>
<div class="statusline d-flex align-items-center">
  <select class="modesel" aria-label="Menu set"><option>Polygons</option></select>
  <div class="d-flex align-items-center" id="status"></div>
  <svg class="tri ms-2"><use href="#tri"/></svg>
  <svg width="20" height="20"><use href="#frm"/></svg>
  <label class="d-flex align-items-center ms-1">X:<input class="field xyz"></label>
  <label class="d-flex align-items-center">Y:<input class="field xyz"></label>
  <label class="d-flex align-items-center">Z:<input class="field xyz"></label>
  <div class="d-flex ms-auto me-1" id="statusR"></div>
</div>
<div class="shelf d-flex">
  <div class="shelfside d-flex flex-column align-items-center justify-content-end gap-1 pb-1"><span class="scrollb" style="width:13px;height:9px"></span><span class="w-100 border-top"></span><svg class="tri"><use href="#tri"/></svg></div>
  <div class="flex-grow-1 shelfmain">
    <div class="d-flex align-items-end" style="height:20px"><div class="d-flex align-items-end" id="shelftabs" role="tablist"></div><svg class="ms-auto" width="14" height="16"><use href="#trash"/></svg></div>
    <div class="shelfbody d-flex justify-content-between"><button aria-label="Shelf script"><svg width="30" height="34"><use href="#check"/></svg></button>
      <div class="d-flex flex-column"><button class="scrollb mini h-50" aria-label="Shelf up"><svg width="7" height="4"><path d="M0 4l3.500-4L7 4z" fill="#ccc"/></svg></button><button class="scrollb mini h-50" aria-label="Shelf down"><svg width="7" height="4"><path d="M0 0h7L3.500 4z" fill="#ccc"/></svg></button></div></div>
  </div>
</div>
<main class="d-flex flex-grow-1 pb-1" style="min-height:0">
  <aside class="toolbox d-flex flex-column"><div class="grip mb-1" style="height:4px"></div><div id="tools"></div><div id="layouts" class="layouts"></div>
    <button class="tool border-secondary" aria-label="More layouts" style="height:31px"><svg style="width:6px;height:5px"><path d="M0 0h6L3 5z" fill="#999"/></svg></button>
    <button class="mt-auto mb-1 ms-1" aria-label="Maya" style="width:30px"><svg width="30" height="30"><use href="#maya"/></svg></button></aside>
  <section class="viewport flex-grow-1 d-flex flex-column ms-1">
    <div class="menu vmenu" data-menu="View,Shading,Lighting,Show,Renderer,Panels"></div>
    <div class="pbar d-flex align-items-center" id="pbar"></div>
    <div class="stage flex-grow-1"><svg class="wire" id="wire" width="1104" height="720" viewBox="47 191 1104 720" aria-label="Wireframe of a Piper PA-28 Cherokee"></svg></div>
  </section>
  <aside class="dock d-flex">
    <div class="d-flex flex-column" style="width:421px">
      <div class="d-flex align-items-center gap-3"><span class="grip flex-grow-1" style="height:6px"></span><span>Channel Box / Layer Editor</span><span class="grip flex-grow-1" style="height:6px"></span>
        <span class="d-flex gap-1"><svg width="12" height="12"><path d="M0 0h12v12H0z" fill="#1a1a1a"/><path d="M2 5h5v5H2zM5 5V2h5v5H7" fill="none" stroke="#ccc"/></svg><svg width="12" height="12"><path d="M0 0h12v12H0z" fill="#1a1a1a"/><path d="M3 3l6 6M9 3L3 9" stroke="#ddd" stroke-width="1.500"/></svg></span></div>
      <div class="d-flex justify-content-end gap-1 pe-1 pt-1" style="height:27px"><svg width="16" height="16"><use href="#tiny3"/></svg><svg width="16" height="16"><use href="#half"/></svg><svg width="16" height="16"><use href="#diag"/></svg></div>
      <div class="menu ps-1" style="height:19px" data-menu="Channels,Edit,Object,Show"></div>
      <div class="wellbox flex-grow-1"></div>
      <div class="grip mx-auto" style="width:138px;height:4px;margin:4px"></div>
      <div class="d-flex align-items-end" style="height:21px"><button class="ltab on">Display</button><button class="ltab">Render</button><button class="ltab">Anim</button></div>
      <div class="layerpane d-flex flex-column">
        <div class="menu ps-1" data-menu="Layers,Options,Help"></div>
        <div class="d-flex justify-content-end gap-2 py-2 pe-2" style="height:30px"><svg width="18" height="16"><use href="#lup"/></svg><svg width="18" height="16"><use href="#ldn"/></svg><svg width="18" height="16"><use href="#lnew"/></svg><svg width="18" height="16"><use href="#lnew2"/></svg></div>
        <div class="wellbox flex-grow-1 p-1 text-white"><div class="d-flex align-items-center gap-1"><button class="laybtn">V</button><button class="laybtn" aria-label="Layer type"></button><svg width="15" height="15"><path d="M1 14L14 1v14" stroke="#ccc" fill="none"/></svg><span>Piper_PA28_161_Cherokee_layer1</span></div></div>
      </div>
    </div>
    <div><button class="vtab on d-block" style="height:152px">Channel Box / Layer Editor</button><button class="vtab d-block" style="height:98px">Attribute Editor</button></div>
  </aside>
</main>
<section class="outliner" aria-label="Outliner window">
  <div class="ohead d-flex align-items-center gap-2"><svg width="12" height="16"><use href="#app"/></svg><span>Outliner</span>
    <div class="winbtns d-flex ms-auto me-1 align-self-start"><button aria-label="Minimize"><svg width="12" height="10"><path d="M1 5h10v3H1z" fill="#fff" stroke="#444"/></svg></button><button aria-label="Maximize"><svg width="12" height="10"><path d="M2 1h8v7H2z" fill="#fff" stroke="#444"/><path d="M5 4h2v1H5z" stroke="#444"/></svg></button><button class="b-close" aria-label="Close"><svg width="12" height="11"><path d="M2 2l8 7M10 2L2 9" stroke="#333" stroke-width="4"/><path d="M2 2l8 7M10 2L2 9" stroke="#fff" stroke-width="2.500"/></svg></button></div></div>
  <div class="oclient flex-grow-1 d-flex flex-column">
    <div class="menu ps-1" style="height:20px" data-menu="Display,Show,Help"></div>
    <div class="d-flex align-items-center"><svg width="24" height="18"><circle cx="9" cy="9" r="6" fill="none" stroke="#333" stroke-width="2" stroke-dasharray="3 3"/></svg><input class="field flex-grow-1" style="height:18px" aria-label="Filter"></div>
    <div class="d-flex flex-grow-1 mt-1" style="min-height:0"><div class="tree flex-grow-1" id="tree"></div>
      <div class="d-flex flex-column" style="width:16px;background:#3a3a3a"><button class="scrollb mini" aria-label="Up"><svg width="7" height="4"><path d="M0 4l3.500-4L7 4z" fill="#ccc"/></svg></button><div class="d-flex align-items-center justify-content-center" style="background:#606060;width:15px;flex:478"><span class="grip" style="width:12px;height:18px"></span></div><div style="flex:158"></div><button class="scrollb mini" aria-label="Up"><svg width="7" height="4"><path d="M0 4l3.500-4L7 4z" fill="#ccc"/></svg></button><button class="scrollb mini" aria-label="Down"><svg width="7" height="4"><path d="M0 0h7L3.500 4z" fill="#ccc"/></svg></button></div></div>
    <div class="d-flex gap-1 pt-1 pe-3"><button class="scrollb mini dim" aria-label="Left"><svg width="4" height="7"><path d="M4 0v7L0 3.500z" fill="#ddd"/></svg></button><div class="flex-grow-1 d-flex justify-content-center align-items-center" style="border:1px solid #555"><span class="grip" style="width:20px;height:10px"></span></div><button class="scrollb mini dim" aria-label="Left"><svg width="4" height="7"><path d="M4 0v7L0 3.500z" fill="#ddd"/></svg></button><button class="scrollb mini dim" aria-label="Right"><svg width="4" height="7"><path d="M0 0v7l4-3.500z" fill="#ddd"/></svg></button></div>
    <div class="grip mx-auto mt-1" style="width:94px;height:4px"></div>
  </div>
</section>
<footer>
  <div class="tbar d-flex align-items-center pe-1" style="height:37px;padding-left:14px">
    <div class="ruler d-flex flex-grow-1" id="ruler"></div>
    <input class="field numf ms-1 me-1" value="1.00" aria-label="Current time">
    <div class="trans d-flex" style="gap:2px" id="trans"></div></div>
  <div class="tbar d-flex align-items-center gap-1 pe-1" style="height:29px;padding-left:14px">
    <input class="field numf" value="1.00" aria-label="Start"><input class="field numf" value="1.00" aria-label="Playback start">
    <div class="range flex-grow-1"><div class="rbar d-flex align-items-center gap-2"><span class="rend"></span>1<span class="ms-auto">24</span><span class="rend"></span></div></div>
    <input class="field numf" value="24.00" aria-label="Playback end"><input class="field numf" value="48.00" aria-label="End">
    <svg class="tri"><use href="#tri"/></svg><button class="field text-start namef">No Anim Layer</button>
    <svg class="tri"><use href="#tri"/></svg><button class="field text-start namef">No Character Set</button>
    <svg width="18" height="10"><use href="#key"/></svg><svg width="14" height="14" class="me-1"><use href="#autok"/></svg></div>
  <div class="tbar d-flex align-items-center pe-1" style="height:31px;padding-left:24px"><label for="mel" style="width:34px">MEL</label><input id="mel" class="field" style="height:24px;flex:916"><div class="ms-2" style="background:#000;height:25px;flex:917"></div><svg width="14" height="14" class="mx-1"><use href="#scr"/></svg></div>
  <div class="tbar" style="padding:3px 3px 4px 13px;height:29px"><div style="border:1px solid #2c2c2c;border-bottom-color:#606060;padding:3px 11px;height:21px">Select Tool: select an object</div>
    <svg class="sizer" width="12" height="12"><path d="M1 12L12 1M5 12l7-7M9 12l3-3" stroke="#222" stroke-width="1.500"/></svg></div>
</footer>
<script>
const $=id=>document.getElementById(id);
document.querySelectorAll('[data-menu]').forEach(m=>m.innerHTML=m.dataset.menu.split(',').map(t=>`<a href="#">${t}</a>`).join(''));
const bar=s=>s.split(' ').map(t=>{if(t==='|')return'<span class="vsep"></span>';const[n,c='']=t.split(':');return`<button class="cell ${c}" aria-label="${n}"><svg><use href="#${n}"/></svg></button>`}).join('');
$('status').innerHTML=bar('| new open save more:thin | hier objm:on comp | mask:mid plus:flat joint:flat curve:flat surf:flat latt:flat dots:flat dyn:flat quest:flat lock hilite | mgrid mcurve mpt mpl mag1 | inp outp hist:on | rwin rend ipr rset |');
$('statusR').innerHTML=bar('cbox:on toolset attr:on');
$('pbar').innerHTML=bar('| cam camat book imgp pan | grid:on film resg gate:on fchart safe safet | cubew:on cubes cubesw chk:on yel gry gld | iso | xray xj xs');
$('shelftabs').innerHTML='General,Curves,Surfaces,Polygons,Subdivs,Deformation,Animation,Dynamics,Rendering,PaintEffects,Toon,Muscle,Fluids,Fur,Hair,nCloth,Custom'.split(',').map(t=>`<button role="tab" class="stab${t==='Custom'?' on':''}">${t}</button>`).join('');
$('tools').innerHTML='sel lasso paint move rot scale manip soft univ none'.split(' ').map((t,i)=>`<button class="tool${i?'':' on'}" aria-label="${t}"><svg><use href="#${t}"/></svg></button>`).join('');
$('layouts').innerHTML=[1,2,3,4,5,6].map(i=>`<button class="lay" aria-label="Layout ${i}"><svg><use href="#l${i}"/></svg></button>`).join('');
$('trans').innerHTML=['t1','t2','t3','t4','t4r','t3r','t2r','t1r'].map(t=>`<button aria-label="${t}"><svg viewBox="0 0 26 16">${t[2]?`<g transform="matrix(-1 0 0 1 26 0)"><use href="#${t.slice(0,2)}"/></g>`:`<use href="#${t}"/>`}</svg></button>`).join('');
let r='';for(let i=1;i<=24;i++)r+=`<div class="frame${i===1?' now':''}">${i}${i===1?'<div class="text-white">1</div>':''}</div>`;$('ruler').innerHTML=r;
let bt='';for(let x=428;x<1700;x+=132)bt+=`<path d="M${x-30} 0h18l-8 10z" fill="#0b1524"/><circle cx="${x}" cy="14" r="5" fill="#93415a" opacity=".8"/><path d="M${x+22} 15h42M${x+84} 14h8" stroke="#5e82aa" stroke-width="6"/>`;
bt+='<path d="M1000 0h450v3h-450z" fill="#0b1524"/><path d="M1470 3h120v17h-120z" fill="#a9cdf0"/>';$('blurtabs').innerHTML=bt;
const rows='-Piper_PA28_161_Cherokee,Skrew,+Back_Wheels,Glass,Sat,Engine2,Light,Rung,Aileron2,Mount,Salon,Chair,Panel,Upholstery,Panel_Devices,Pedals,Arm,Belts,Light2,Engine,+Back_Wheels2,Controls,Housing,Elevator,Rudder,+Aileron_Right,+Front_Doorm,Back_Chassis2,Front_Chassis2,+Aileron_Left,Fixing_Glass,Loops2,Locks,Detals'.split(',');
$('tree').innerHTML=rows.map((t,i)=>{const e=/^[+-]/.test(t)?t[0]:'',n=e?t.slice(1):t,x=!i||/Chassis/.test(n);
return`<div class="trow"><span class="exp ${e==='+'?'plus':e?'':'none'}"></span><svg class="ti"><use href="#${x?'xform':'mesh'}"/></svg><svg class="conn ${i?'':'root'}"><g fill="none" stroke="#ccc">${i?'<path d="M2.500 0v20M3 10.500h17"/><circle cx="22.500" cy="10.500" r="2"/>':'<path d="M2.500 13v7"/><circle cx="2.500" cy="10.500" r="2"/>'}</g></svg><span>${n}</span></div>`}).join('')+'<svg width="80" height="5" class="ms-5"><path d="M17.500 0v5" stroke="#ccc"/></svg>';

/* Wireframe model: each surface is a loft through projected cross sections. */
const out=[];
const cr=(a,b,c,d,t)=>[0,1].map(k=>.5*(2*b[k]+(c[k]-a[k])*t+(2*a[k]-5*b[k]+4*c[k]-d[k])*t*t+(3*b[k]-a[k]-3*c[k]+d[k])*t*t*t));
const at=(p,u)=>{const n=p.length-1,s=Math.min(n-1,Math.floor(u*n)),t=u*n-s;return cr(p[Math.max(0,s-1)],p[s],p[s+1],p[Math.min(n,s+2)],t)};
const line=(p,w,c)=>out.push(`<path d="M${p.map(q=>q[0].toFixed(1)+' '+q[1].toFixed(1)).join('L')}"${w?` style="stroke-width:${w}"`:''}${c?` class="${c}"`:''}/>`);
const steps=(n,f)=>Array.from({length:n+1},(_,i)=>f(i/n));
function loft(S,us,vs){const pt=(u,v)=>at(S.map(s=>at(s,v)),u);
 us.forEach(u=>line(steps(36,v=>pt(u,v))));vs.forEach(v=>line(steps(36,u=>pt(u,v))))}
const lin=n=>steps(n,x=>x);const dbl=(n,d)=>lin(n).flatMap(x=>[x,Math.min(1,x+d)]);
let seed=7;const rnd=()=>(seed=(seed*16807)%2147483647)/2147483647;
const ring=(T,B,w,n=32)=>steps(n,t=>{const c=[(T[0]+B[0])/2,(T[1]+B[1])/2],a=t*2*Math.PI;return[c[0]+(T[0]-c[0])*Math.cos(a)+w*.9*Math.sin(a),c[1]+(T[1]-c[1])*Math.cos(a)-w*.4*Math.sin(a)]});
// far wing
loft([[[180,364],[190,351],[221,337],[277,329],[338,334]],[[215,391],[245,380],[290,372],[345,368],[388,368]],[[253,421],[285,414],[335,403],[390,396],[425,394]],[[308,464],[345,454],[385,440],[430,428],[455,416]],[[364,508],[395,495],[430,478],[470,455],[482,427]]],lin(11).concat([.015,.04,.065,.14]),[0,.012,.035,.13,.15,.27,.29,.42,.44,.56,.58,.7,.72,.82,.88,.92,.95,.975,1]);
loft([[[180,366],[200,350],[235,342],[285,338],[338,334]],[[253,422],[275,398],[330,388],[439,399]],[[364,508],[375,485],[410,462],[482,427]]].map(s=>steps(4,v=>at(s,v))),[.03,.12,.3,.45,.6,.75,.9],[.92]);
line([[427,407],[450,408],[463,424],[480,436],[455,436],[427,407]],2);line([[427,407],[440,425],[450,436],[460,420],[438,412],[450,436]],2);line([[237,342],[247,338]],5);
// near wing
const W=[[[956,868],[978,862],[1010,845],[1070,800],[1112,751]],[[874,820],[902,790],[950,752],[1000,722],[1038,717]],[[786,768],[815,740],[865,703],[925,676],[980,688]],[[721,732],[750,700],[800,662],[858,638],[910,655]],[[640,685],[675,652],[725,617],[780,600],[830,616]],[[571,645],[607,614],[650,584],[700,568],[750,580]],[[486,628],[522,608],[570,582],[625,553],[679,545]]];
loft(W,[0,.012,.04,.08,.12,.18,.25,.33,.4,.48,.55,.63,.7,.75,.79,.83,.86,.89,.92,.94,.96,.98,1],[0,.015,.03,.14,.15,.27,.4,.41,.53,.66,.67,.78,.87,.9,.93,.955,.975,.99,1]);
loft(W.map(s=>s.map((p,i)=>[p[0]+[0,10,8,4,0][i],p[1]+[0,8,10,6,0][i]])),[.06,.15,.3,.44,.58,.72,.81,.88,.95],[.05,.4]);
line([[956,868],[990,861],[1012,845],[1065,812],[1090,790],[1105,773],[1115,753],[1108,747]],2);
line([[679,545],[751,580],[874,637],[947,673],[1038,717],[1111,748]],2);
line([[660,552],[742,592],[870,645]]);line([[668,568],[742,605],[850,656],[885,640],[868,636]]);line([[668,571],[742,608],[850,659]]);
for(let i=0;i<=12;i++){const x=668+i*15.500;line([[x,556+i*6.900],[x+2,572+i*6.900]])}
[[742,605],[822,648],[671,569]].forEach(([x,y])=>{line([[x-5,y-3],[x+4,y-3],[x+1,y+8],[x-5,y-3]],1,'blk');line([[x+1,y+4],[x+9,y-11]],3)});
line([[716,654],[717,663],[720,663],[722,652]],3);line([[818,702],[827,703],[825,718],[819,717],[818,702]],2);line([[822,703],[822,718]],3);line([[1050,821],[1063,814]],6);
line([[548,630],[554,641],[560,628],[562,640],[548,636]],2);
// fuselage
const st=[[205,588,260,676,9],[225,578,295,678,16],[277,555,340,665,20],[352,522,420,645,26],[395,473,486,627,30],[429,446,530,608,34],[480,426,580,588,34],[573,404,650,556,34],[642,396,713,517,30],[700,388,765,482,24],[759,378,815,449,20],[815,360,858,418,14],[872,360,893,398,8]].map(s=>ring([s[0],s[1]],[s[2],s[3]],s[4]));
loft(st.slice(8),[0,.06,.18,.3,.42,.56,.7,.8,.88,.94,.97,1],lin(50));
loft(st.slice(0,9),[.02,.04,.07,.1,.14,.2,.27,.34,.37,.4,.46,.52,.58,.64,.7,.76,.82,.88,.93,.97],lin(104));
loft(st.slice(0,4).map(s=>s.map(p=>[p[0]+4,p[1]+3])),lin(6),lin(24));
[[0,2],[3.600,2],[4.800,3],[6,2],[6.900,4],[7.900,3]].forEach(([i,w])=>line(steps(40,v=>at(st.map(s=>at(s,v*.5)),i/12)),w));
line([[198,603],[206,623],[229,648],[250,668],[293,676],[330,666],[403,648],[486,627],[580,588],[679,541],[713,517],[790,468],[858,418],[893,398]],2);
line([[200,590],[206,582],[221,577],[277,555],[352,522],[395,473],[429,445],[480,426],[573,404],[667,392],[759,378],[790,363],[824,342]],3);
line([[361,517],[400,555],[440,600]],3);line([[330,650],[420,625],[500,600],[590,560],[700,515]],3);line([[250,645],[340,620],[450,590],[560,550],[640,505]],3);line([[520,465],[590,440],[650,425]],3);
function scribble(cx,cy,rx,ry,n,sp){for(let i=0;i<n;i++){const a=rnd()*6.28,q=Math.sqrt(rnd()),x=cx+rx*q*Math.cos(a),y=cy+ry*q*Math.sin(a)-.25*rx*q*Math.cos(a);const d=rnd()<.5?[-.9,.38]:[.2,1];const L=sp*(.4+rnd());line([[x-d[0]*L*.5,y-d[1]*L*.5],[x+rnd()*4,y+rnd()*4],[x+d[0]*L*.5,y+d[1]*L*.5]])}}
scribble(480,540,80,52,560,30);scribble(450,550,48,42,480,26);scribble(598,505,48,36,380,28);scribble(420,515,40,40,160,26);scribble(270,615,45,30,90,26);scribble(226,618,12,28,110,16);scribble(370,575,50,45,130,30);
for(let i=0;i<4;i++)scribble(490+i*52,470-i*6,5,48,60,26);
scribble(882,382,12,14,90,12);scribble(850,374,26,16,60,14);
line([[206,590],[218,612],[240,645],[262,668]],4);
// spinner, propeller, cowl lip
loft([[[172,640],[172,641],[172,642],[173,643]],[[178,623],[195,625],[200,640],[188,648]],[[197,607],[216,615],[228,635],[226,650]]],lin(6),lin(7));
line([[172,641],[182,622],[197,607]],2);line([[172,641],[190,648],[229,649]],2);
line([[155,567],[160,569],[185,590],[200,602],[196,611],[180,596],[160,574],[155,567]],1,'blk');
line([[228,646],[245,660],[275,670],[290,684],[286,687],[262,677],[250,673],[228,646]],2,'blk');
line([[290,682],[308,678],[325,668],[318,678],[298,685],[290,682]],2);
// landing gear
function wheel(cx,cy,rx,ry){for(let i=3;i<=9;i+=1.5)line(steps(30,t=>[cx+rx*i/9*Math.cos(t*6.283),cy+ry*i/9*Math.sin(t*6.283)+(9-i)*-.6]));for(let i=0;i<20;i++){const a=i/20*6.283;line([[cx+5*Math.cos(a),cy-4+5*Math.sin(a)],[cx+rx*Math.cos(a),cy+ry*Math.sin(a)]])}
 for(let k=-1;k<=1;k+=2)line(steps(30,t=>[cx+k*4+rx*.75*Math.cos(t*6.283),cy+ry*.97*Math.sin(t*6.283)]));scribble(cx,cy-6,rx*.4,ry*.4,50,10)}
wheel(320,720,24,22);line([[324,665],[328,690]],4);line([[320,668],[321,700]],4);line([[334,668],[346,679],[331,697]],3);line([[312,694],[312,720],[328,715],[330,692]],3);
wheel(670,688,23,22);wheel(680,676,20,23);
for(let i=0;i<9;i++)line([[652+i*3.100,617-(i%3)*1.500],[657+i*2.400,655+(i%4)*3]],1);line([[653,618],[678,613]],2);scribble(666,655,6,18,60,14);
// horizontal tail
loft([[[718,332],[724,325],[740,322],[774,321]],[[745,346],[760,338],[780,332],[805,333]],[[790,363],[805,355],[822,348],[835,346]],[[840,385],[850,374],[860,364],[880,362]]],dbl(11,.025),lin(12));
line([[718,332],[732,323],[774,321],[824,342],[870,358]],2);line([[718,332],[725,338],[790,364]],2);
line([[785,333],[802,336]],4);
loft([[[883,403],[886,390],[892,378],[897,368]],[[954,433],[962,417],[970,405],[978,398]],[[1008,454],[1018,440],[1026,427],[1034,419]],[[1034,456],[1044,450],[1052,440],[1054,430]],[[1040,454],[1053,447],[1060,438],[1056,430]]],dbl(12,.02),lin(11));
line([[897,369],[1015,413],[1054,428],[1060,437],[1054,446],[1034,456],[1010,455],[954,432],[885,403]],2);line([[900,382],[1000,418],[1015,420]],2);line([[1000,420],[1012,414]],5);
// fin and rudder
loft([[[824,343],[850,350],[872,357],[893,362]],[[855,293],[875,291],[890,294],[909,291]],[[889,235],[900,237],[912,233],[922,233]]],dbl(12,.02),lin(12));
line([[824,342],[855,293],[889,235]],3);line([[922,235],[908,300],[893,362]],4);line([[902,238],[888,300],[872,360]],3);
line([[891,213],[900,213],[901,232],[890,236],[891,213]],2,'blk');line([[900,232],[912,226],[924,222],[928,227],[924,236],[905,237]],2);line([[923,223],[924,233]],7);line([[922,236],[950,237]],3);line([[945,237],[984,239]],2);
// antennas and beacon
line([[692,353],[665,397]],2);line([[747,348],[725,392]],2);line([[574,406],[575,401],[587,401],[588,406]],3);
let o=out.join('');
o+='<path d="M619 581L636 570 658 579 641 592Z" style="fill:#8b8b8b;stroke:none"/><path d="M628 584L651 574M630 574L650 586" style="stroke:#000;stroke-width:1.5"/>';
out.length=0;line([[619,571],[660,590]]);line([[622,591],[655,569]]);o+=out.join('');
o+='<path d="M73 887V874" style="stroke:#0f0"/><path d="M73 887L63 891" style="stroke:#00f"/><path d="M73 887L82 891" style="stroke:#f00"/><g class="axl"><text x="69" y="869" fill="#0f0">y</text><text x="57" y="890" fill="#00f">z</text><text x="79" y="890" fill="#f00">x</text><text x="733" y="902" fill="#07481f">persp</text></g>';
$('wire').innerHTML=o;
</script>
</body>
</html>
